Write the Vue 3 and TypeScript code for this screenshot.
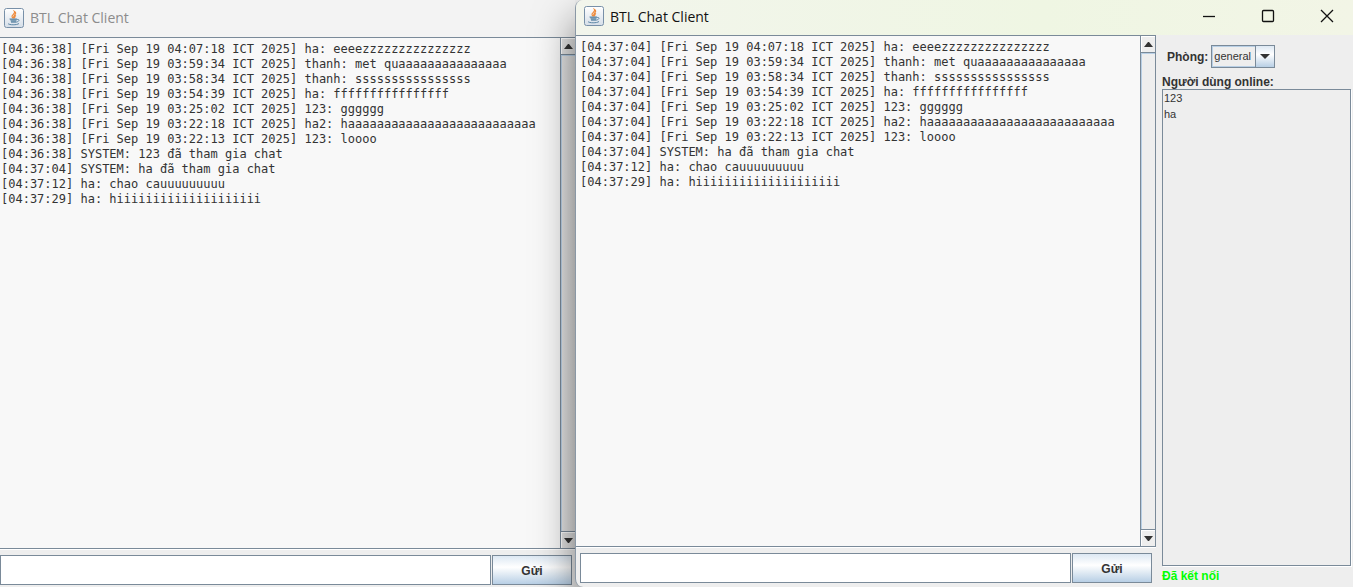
<script setup lang="ts">
interface ChatWindow {
  id: string
  active: boolean
  title: string
  lines: string[]
}

const history: string[] = [
  '[Fri Sep 19 04:07:18 ICT 2025] ha: eeeezzzzzzzzzzzzzzz',
  '[Fri Sep 19 03:59:34 ICT 2025] thanh: met quaaaaaaaaaaaaaaa',
  '[Fri Sep 19 03:58:34 ICT 2025] thanh: ssssssssssssssss',
  '[Fri Sep 19 03:54:39 ICT 2025] ha: ffffffffffffffff',
  '[Fri Sep 19 03:25:02 ICT 2025] 123: gggggg',
  '[Fri Sep 19 03:22:18 ICT 2025] ha2: haaaaaaaaaaaaaaaaaaaaaaaaaa',
  '[Fri Sep 19 03:22:13 ICT 2025] 123: loooo',
]
const recent: string[] = [
  '[04:37:04] SYSTEM: ha đã tham gia chat',
  '[04:37:12] ha: chao cauuuuuuuuu',
  '[04:37:29] ha: hiiiiiiiiiiiiiiiiiiii',
]

const windows: ChatWindow[] = [
  {
    id: 'back',
    active: false,
    title: 'BTL Chat Client',
    lines: [
      ...history.map((h) => `[04:36:38] ${h}`),
      '[04:36:38] SYSTEM: 123 đã tham gia chat',
      ...recent,
    ],
  },
  {
    id: 'front',
    active: true,
    title: 'BTL Chat Client',
    lines: [...history.map((h) => `[04:37:04] ${h}`), ...recent],
  },
]
const users: string[] = ['123', 'ha']
</script>

<template>
  <div class="desktop">
    <section v-for="w in windows" :key="w.id" class="window" :class="w.id">
      <header class="titlebar">
        <svg class="java" viewBox="0 0 20 20" aria-hidden="true">
          <defs>
            <linearGradient :id="'tile-' + w.id" x1="0" y1="0" x2="0" y2="1">
              <stop offset="0" stop-color="#ffffff" />
              <stop offset="1" stop-color="#d5dee8" />
            </linearGradient>
          </defs>
          <rect x=".5" y=".5" width="19" height="19" rx="2" :fill="`url(#tile-${w.id})`" stroke="#7890a8" />
          <path d="M9.500 10.500C5 7.500 12 6 10.500 3.500 14 5.500 8.500 7.500 9.500 10.500M11 10.500C10 9 11 8 12 7.500" fill="none" stroke="#ef8b3c" stroke-width="1.200" />
          <path d="M6 11h7l-1 3H7z" fill="#7c9db5" />
          <path d="M5.500 11h7.500M13 11.500c3-.5 2.500 2-.5 2.500M4 15.500c1 1.700 9 1.700 11 0M7 14.200h5.500" fill="none" stroke="#5d87a6" stroke-width="1" />
        </svg>
        <h1>{{ w.title }}</h1>
        <div v-if="w.active" class="controls">
          <button type="button" aria-label="Minimize">
            <svg viewBox="0 0 14 14"><path d="M1 7.500h12" /></svg>
          </button>
          <button type="button" aria-label="Maximize">
            <svg viewBox="0 0 14 14"><rect x="1.500" y="1.500" width="11" height="11" rx="1" /></svg>
          </button>
          <button type="button" aria-label="Close">
            <svg viewBox="0 0 14 14"><path d="M1 1l12 12M13 1L1 13" /></svg>
          </button>
        </div>
      </header>
      <div class="body">
        <main class="chat">
          <div class="scrollpane">
            <div class="log"><p v-for="line in w.lines" :key="line">{{ line }}</p></div>
            <div class="scrollbar">
              <button type="button" aria-label="Scroll up">
                <svg viewBox="0 0 9 5"><path d="M0 5h9L5 0H4z" /></svg>
              </button>
              <div class="track"></div>
              <button type="button" aria-label="Scroll down">
                <svg viewBox="0 0 9 5"><path d="M0 0h9L5 5H4z" /></svg>
              </button>
            </div>
          </div>
          <form class="compose" @submit.prevent>
            <input type="text" aria-label="Message" />
            <button type="submit">Gửi</button>
          </form>
        </main>
        <aside v-if="w.active" class="side">
          <div class="room">
            <label for="room">Phòng:</label>
            <span class="combo">
              <select id="room"><option>general</option></select>
              <span class="arrow"><svg viewBox="0 0 10 5"><path d="M0 0h10L5 5z" /></svg></span>
            </span>
          </div>
          <h2>Người dùng online:</h2>
          <ul><li v-for="u in users" :key="u">{{ u }}</li></ul>
          <p class="status">Đã kết nối</p>
        </aside>
      </div>
    </section>
  </div>
</template>

<style>
body {
  margin: 0;
}
</style>

<style scoped>
* {
  box-sizing: border-box;
}
.desktop {
  display: flex;
  height: 100vh;
  overflow: hidden;
  background: #eee;
  color: #333;
  font: 12px/15px "Liberation Sans", Arial, sans-serif;
}
h1, h2, p, ul {
  margin: 0;
  padding: 0;
}
button {
  margin: 0;
  padding: 0;
  border: 0;
  color: inherit;
  font: inherit;
}
svg {
  display: block;
}
.window {
  display: flex;
  flex-direction: column;
  min-width: 0;
  background: #eee;
}
.back {
  flex: 0 0 42.500%;
}
.front {
  position: relative;
  flex: 1;
  border-left: 1px solid #8a98a6;
  border-radius: 8px 0 0 8px;
  overflow: hidden;
  box-shadow: 0 20px 40px rgba(0, 0, 0, 0.5);
}
.titlebar {
  display: flex;
  flex: none;
  align-items: center;
  gap: 6px;
  height: 37px;
  padding: 0 0 2px 4px;
  background: #f3f3f3;
}
.front .titlebar {
  height: 35px;
  padding: 0 0 3px 8px;
  background: linear-gradient(90deg, #f2f5ec, #eff6e3 60%, #f2f5e6);
}
.java {
  width: 20px;
  height: 20px;
}
h1 {
  flex: 1;
  padding-top: 1px;
  color: #8c8c8c;
  font: 400 14px/20px "Open Sans", "Noto Sans", sans-serif;
}
.front h1 {
  color: #111;
}
.controls {
  display: flex;
  gap: 12px;
  padding-right: 3px;
}
.controls button {
  display: grid;
  place-items: center;
  width: 47px;
  height: 30px;
  background: none;
}
.controls svg {
  width: 14px;
  height: 14px;
  fill: none;
  stroke: #111;
  stroke-width: 1.300;
}
.body {
  display: flex;
  flex: 1;
  min-height: 0;
}
.chat {
  display: flex;
  flex: 1;
  flex-direction: column;
  min-width: 0;
}
.scrollpane {
  display: flex;
  flex: 1;
  min-height: 0;
  border: 1px solid #7a8a99;
  border-width: 1px 0;
  box-shadow: 0 1px #fff;
}
.front .scrollpane {
  border-right-width: 1px;
}
.log {
  flex: 1;
  min-width: 0;
  padding: 4px 1px;
  overflow: hidden;
  background: #f8f8f8;
  font: 12px/15px "DejaVu Sans Mono", "Liberation Mono", monospace;
  white-space: pre;
}
.front .log {
  padding-left: 4px;
}
.scrollbar {
  display: flex;
  flex-direction: column;
  flex: none;
  width: 15px;
  border-left: 1px solid #7a8a99;
}
.scrollbar button {
  display: grid;
  place-items: center;
  height: 16px;
  background: #eee;
  box-shadow: inset 1px 1px #fff;
}
.back .scrollbar button,
.back .track {
  background: linear-gradient(90deg, #e6e6e6, #ddd);
}
.scrollbar svg {
  width: 9px;
  height: 5px;
  fill: #333;
}
.track {
  flex: 1;
  border: 1px solid #7a8a99;
  border-width: 1px 0;
  box-shadow: inset 1px 1px #b8cfe5;
}
.compose {
  display: flex;
  flex: none;
  gap: 1px;
  padding: 6px 3px 2px 0;
}
.front .compose {
  padding: 6px 4px 4px 4px;
}
.compose input {
  flex: 1;
  min-width: 0;
  height: 30px;
  padding: 0 4px;
  border: 1px solid #7a8a99;
  border-radius: 0;
  background: #fff;
  font: inherit;
  outline: 0;
}
.compose button {
  width: 80px;
  height: 30px;
  padding-top: 2px;
  border: 1px solid #7a8a99;
  background: linear-gradient(#dde8f3, #fff 40%, #b8cfe5);
  font-weight: 700;
}
.side {
  display: flex;
  flex: none;
  flex-direction: column;
  width: 197px;
  padding: 10px 2px 3px 6px;
}
.room {
  display: flex;
  align-items: center;
  gap: 3px;
  padding-left: 5px;
}
.room label,
h2,
.status {
  font: 700 12px/15px "Liberation Sans", Arial, sans-serif;
}
.room label {
  padding-top: 2px;
}
.combo {
  position: relative;
  width: 64px;
  height: 23px;
}
.combo select {
  width: 100%;
  height: 100%;
  margin: 0;
  padding: 0 20px 0 2px;
  border: 1px solid #7a8a99;
  border-radius: 0;
  appearance: none;
  background: #eee;
  box-shadow: inset 0 0 0 1px #b8cfe5;
  color: #333;
  font: 11px/15px "Liberation Sans", Arial, sans-serif;
}
.arrow {
  position: absolute;
  top: 0;
  right: 0;
  display: grid;
  place-items: center;
  width: 20px;
  height: 100%;
  border: 1px solid #7a8a99;
  background: linear-gradient(#dde8f3, #fff 40%, #b8cfe5);
  pointer-events: none;
}
.arrow svg {
  width: 10px;
  height: 5px;
  fill: #333;
}
h2 {
  margin-top: 7px;
  line-height: 14px;
}
ul {
  flex: 1;
  padding: 0 1px;
  border: 1px solid #7a8a99;
  box-shadow: 1px 1px #fff;
  list-style: none;
  font-size: 11px;
  line-height: 16px;
}
.status {
  margin-top: 3px;
  color: #00ff00;
}
</style>
